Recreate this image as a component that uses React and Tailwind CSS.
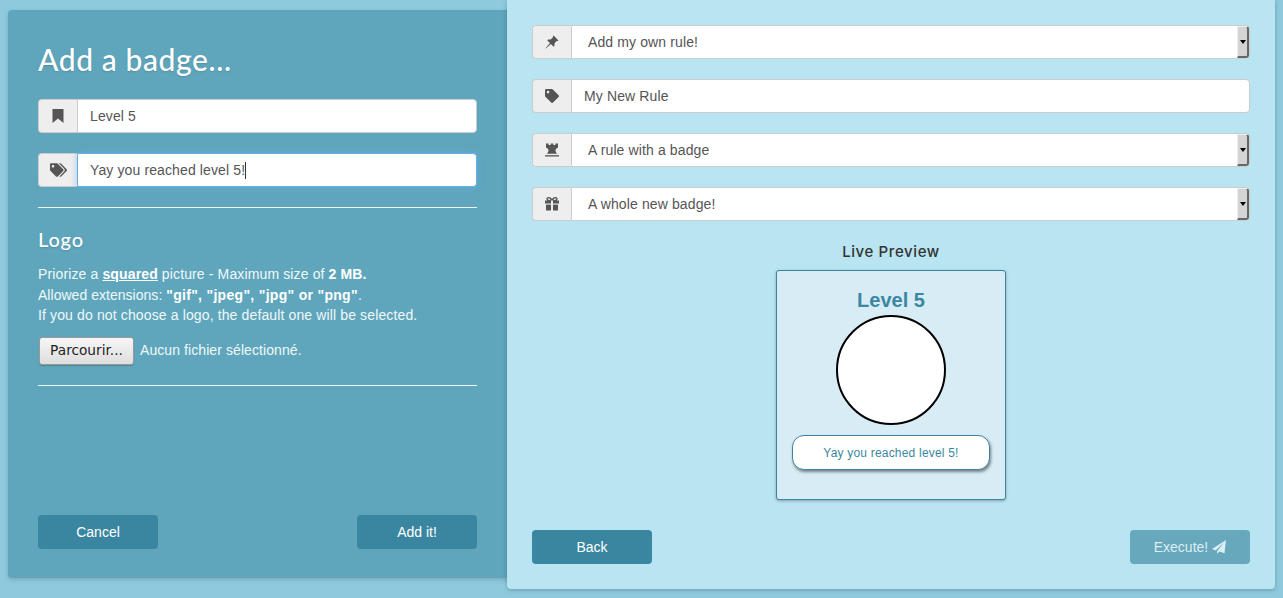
import { FaTag, FaTags } from "react-icons/fa";

const PinIcon = () => (
  <svg viewBox="0 0 16 16" className="h-[14px] w-[14px] fill-[#555]">
    <path d="M9.8 0.6 15.4 6.2 14.6 7 13.6 6.7 10.9 9.4 10.8 12.4 9.8 13.4 6.8 10.3 1 15.4 0.6 15 5.7 9.2 2.6 6.2 3.6 5.2 6.6 5.1 9.3 2.4 9 1.4Z" />
  </svg>
);

const TowerIcon = () => (
  <svg viewBox="0 0 14 14" className="h-[14px] w-[14px] fill-[#555]">
    <path d="M1 0.5H3.6V2H5.7V0.5H8.3V2H10.4V0.5H13V4.5L10.6 6.2V8.5L12 10.8H2L3.4 8.5V6.2L1 4.5Z" />
    <rect x="0" y="12.2" width="14" height="1.3" />
  </svg>
);

const BookmarkIcon = () => (
  <svg viewBox="0 0 12 14" className="h-[14px] w-[12px] fill-[#555]">
    <path d="M0.5 0H11.5V14L6 9.5 0.5 14Z" />
  </svg>
);

const GiftIcon = () => (
  <svg viewBox="0 0 14 14" className="h-[14px] w-[14px] fill-[#555]">
    <path fillRule="evenodd" d="M3.6 0C5 0 6.4 0.9 7 2.2 7.6 0.9 9 0 10.4 0 11.8 0 12.6 0.8 12.6 1.7 12.6 2.4 12.2 3 11.6 3.4H14V6.4H8V3.6H6V6.4H0V3.4H2.4C1.8 3 1.4 2.4 1.4 1.7 1.4 0.8 2.2 0 3.6 0ZM3.5 1.2C3 1.2 2.7 1.4 2.7 1.8 2.7 2.5 3.8 3.2 5.6 3.2 5.3 2.1 4.4 1.2 3.5 1.2ZM10.5 1.2C9.6 1.2 8.7 2.1 8.4 3.2 10.2 3.2 11.3 2.5 11.3 1.8 11.3 1.4 11 1.2 10.5 1.2Z" />
    <rect x="1" y="7.6" width="5" height="5.9" />
    <rect x="8" y="7.6" width="5" height="5.9" />
  </svg>
);

const SendIcon = () => (
  <svg viewBox="0 0 14 14" className="h-[14px] w-[14px] fill-current">
    <path d="M14 0 0 9 3.5 10.5 12 2.5 5 11.3V13.8L7.5 11.6 12.5 13.2Z" />
  </svg>
);

const ADDONS = {
  bookmark: <BookmarkIcon />,
  tags: <FaTags className="h-[14px] w-[17px] text-[#555]" />,
  pin: <PinIcon />,
  tag: <FaTag className="h-[14px] w-[14px] text-[#555]" />,
  tower: <TowerIcon />,
  gift: <GiftIcon />,
};

const Field = ({ icon, children, focus, select, className }) => (
  <div className={`flex h-[34px] w-full text-[14px] tracking-[0.12px] text-[#555] ${className || ""}`}>
    <div className="flex w-[39px] shrink-0 items-center justify-center rounded-l-[4px] border border-r-0 border-[#ccc] bg-[#eee]">
      {ADDONS[icon]}
    </div>
    <div
      className={`flex flex-1 rounded-r-[4px] border bg-white ${
        focus ? "border-[#66afe9] shadow-[0_0_6px_rgba(102,175,233,0.6)]" : "border-[#ccc]"
      }`}
    >
      <div className={`flex flex-1 items-center ${select ? "pl-4" : "pl-3"}`}>{children}</div>
      {select && (
        <div className="flex w-3 items-center justify-center rounded-r-[3px] border-t border-r-2 border-b-2 border-l border-t-[#eee] border-r-[#666] border-b-[#666] border-l-[#eee] bg-[#d4d4d4]">
          <span className="h-0 w-0 border-x-[3px] border-t-[4px] border-x-transparent border-t-black" />
        </div>
      )}
    </div>
  </div>
);

const ActionButton = ({ children, muted }) => (
  <button
    className={`flex h-[34px] w-[120px] items-center justify-center gap-1 rounded-[4px] text-[14px] ${
      muted ? "bg-[#68a8bc] text-[#d9eef5]" : "bg-[#3a86a0] text-white"
    }`}
  >
    {children}
  </button>
);

export default function App() {
  return (
    <div className="flex h-[598px] items-start overflow-hidden bg-[#8dcade] pl-2 font-['Liberation_Sans',sans-serif]">
      {/* left panel */}
      <div className="mt-[10px] flex h-[568px] w-[502px] shrink-0 flex-col rounded-[4px] bg-[#5fa6bc] pl-[30px] pr-[33px] shadow-[0_2px_4px_rgba(0,0,0,0.15)]">
        <h1 className="mt-[30px] mb-[21px] h-[38px] font-['Lato',sans-serif] text-[30px] font-medium leading-[38px] tracking-[0.6px] text-white [text-shadow:0_1px_2px_rgba(0,0,0,0.15)]">
          Add a badge...
        </h1>
        <Field icon="bookmark">Level 5</Field>
        <Field icon="tags" focus className="mt-5">
          Yay you reached level 5!<span className="h-[17px] w-px bg-[#333]" />
        </Field>
        <hr className="mt-5 border-t border-white/90" />
        <h2 className="mt-[20px] font-['Lato',sans-serif] text-[20px] font-medium leading-[22px] tracking-[0.8px] text-white [text-shadow:0_1px_2px_rgba(0,0,0,0.15)]">Logo</h2>
        <div className="mt-[14px] text-[14px] leading-[20.5px] tracking-[0.13px] text-[#f0f8fa]">
          <p>
            Priorize a <b className="text-white underline">squared</b> picture - Maximum size of <b className="text-white">2 MB.</b>
          </p>
          <p className="tracking-[0.03px]">
            Allowed extensions: <b className="tracking-[0.3px] text-white">"gif", "jpeg", "jpg" or "png"</b>.
          </p>
          <p>If you do not choose a logo, the default one will be selected.</p>
        </div>
        <div className="mt-[11px] flex items-center text-[14px] tracking-[0.08px] text-[#f0f8fa]">
          <button className="ml-px h-[28px] w-[95px] rounded-[3px] border border-[#999] bg-gradient-to-b from-[#f6f6f6] to-[#dedede] font-['DejaVu_Sans',sans-serif] text-[13.7px] tracking-normal text-[#222] shadow-[0_1px_1px_rgba(0,0,0,0.2)]">
            Parcourir...
          </button>
          <span className="ml-[6px]">Aucun fichier sélectionné.</span>
        </div>
        <hr className="mt-[20px] border-t border-white/90" />
        <div className="mt-auto mb-[29px] flex justify-between">
          <ActionButton>Cancel</ActionButton>
          <ActionButton>Add it!</ActionButton>
        </div>
      </div>

      {/* right panel */}
      <div className="relative z-10 -ml-[3px] flex h-[589px] w-[768px] shrink-0 flex-col rounded-b-[4px] bg-[#b9e4f1] px-[25px] pt-[25px] pb-[25px] shadow-[0_1px_4px_rgba(0,0,0,0.25)]">
        <div className="flex flex-col gap-5">
          <Field icon="pin" select>Add my own rule!</Field>
          <Field icon="tag">My New Rule</Field>
          <Field icon="tower" select>A rule with a badge</Field>
          <Field icon="gift" select>A whole new badge!</Field>
        </div>
        <h3 className="mt-[21px] h-[20px] text-center font-['Inter',sans-serif] text-[15px] font-medium leading-[20px] tracking-[0.6px] text-[#333]">
          Live Preview
        </h3>
        <div className="mx-auto mt-[8px] flex h-[230px] w-[230px] flex-col items-center rounded-[3px] border border-[#3a86a0] bg-[#d7ecf5] shadow-[0_1px_3px_rgba(0,0,0,0.3)]">
          <div className="mt-[18px] text-[20px] font-bold leading-[23px] text-[#3a87a1]">Level 5</div>
          <div className="mt-[3px] h-[110px] w-[110px] rounded-full border-2 border-black bg-white" />
          <div className="mt-[10px] flex h-[35px] w-[198px] items-center justify-center rounded-[12px] border border-[#3a86a0] bg-white text-[12px] tracking-[0.2px] text-[#3a87a1] shadow-[1px_2px_3px_rgba(0,0,0,0.45)]">
            Yay you reached level 5!
          </div>
        </div>
        <div className="mt-auto flex justify-between">
          <ActionButton>Back</ActionButton>
          <ActionButton muted>
            Execute! <SendIcon />
          </ActionButton>
        </div>
      </div>
    </div>
  );
}
